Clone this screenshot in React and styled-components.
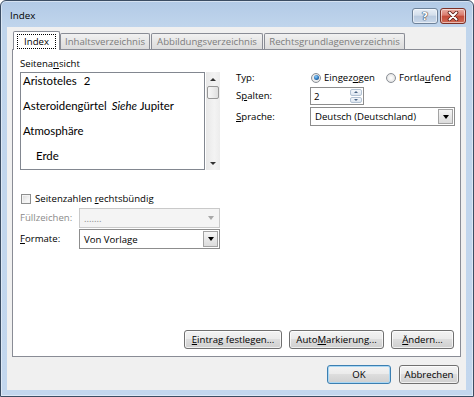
import React from 'react';
import styled, { createGlobalStyle } from 'styled-components';

const UI_FONT = `"Open Sans", "Noto Sans", "DejaVu Sans", sans-serif`;

const GlobalStyle = createGlobalStyle`
  html, body { margin: 0; padding: 0; background: #ffffff; }
  * { box-sizing: border-box; }
`;

const Window = styled.div`
  width: 474px;
  height: 397px;
  border: 1px solid #3b4d63;
  border-radius: 6px 6px 0 0;
  background: linear-gradient(180deg, #b2cae6 0px, #c0d5ec 26px, #c3d7ee 100%);
  box-shadow: inset 0 0 0 1px rgba(255, 255, 255, 0.45);
  display: flex;
  flex-direction: column;
  padding: 0 7px 6px 6px;
  font-family: ${UI_FONT};
  font-size: 9.6px;
  color: #000;
  overflow: hidden;
`;

const TitleBar = styled.div`
  height: 26px;
  flex: none;
  display: flex;
  justify-content: space-between;
  align-items: flex-start;
`;

const Title = styled.div`
  padding: 8px 0 0 3px;
  line-height: 13px;
  font-size: 9.8px;
  color: #000;
`;

const CaptionButtons = styled.div`
  margin-top: 7px;
  display: flex;
  gap: 2px;
`;

const CaptionButton = styled.div`
  width: 26px;
  height: 16px;
  border-radius: 3px;
  border: 1px solid ${p => (p.$close ? '#7d3026' : '#6e8299')};
  background: ${p =>
    p.$close
      ? 'linear-gradient(180deg, #eab0a6 0%, #d97a6c 45%, #c44a38 50%, #cf6a55 100%)'
      : 'linear-gradient(180deg, #e8eff7 0%, #d3deeb 45%, #b9cadf 50%, #c9d8ea 100%)'};
  box-shadow: inset 0 0 0 1px rgba(255, 255, 255, 0.55);
  display: flex;
  align-items: center;
  justify-content: center;
`;

const HelpGlyph = styled.span`
  font-family: "DejaVu Sans", sans-serif;
  font-weight: bold;
  font-size: 11px;
  line-height: 11px;
  color: #ffffff;
  text-shadow: 0 0 1px #2b3b4f, 0 0 1px #2b3b4f, 0 0 1px #2b3b4f;
`;

const Client = styled.div`
  flex: 1;
  background: #f0f0f0;
  display: flex;
  flex-direction: column;
  padding: 4px 5px 6px 5px;
`;

const TabStrip = styled.div`
  height: 18px;
  flex: none;
  display: flex;
  align-items: flex-end;
  padding-left: 1px;
  position: relative;
  z-index: 1;
`;

const Tab = styled.div`
  width: ${p => p.$w}px;
  margin-left: ${p => p.$ml || 0}px;
  height: ${p => (p.$active ? 19 : 16)}px;
  margin-bottom: ${p => (p.$active ? -1 : 0)}px;
  border: 1px solid #898c95;
  border-bottom: none;
  border-radius: 2px 2px 0 0;
  background: ${p =>
    p.$active ? '#ffffff' : 'linear-gradient(180deg, #f1f1f1 0%, #e6e6e6 50%, #dcdcdc 100%)'};
  color: ${p => (p.$active ? '#000' : '#7c7c7c')};
  display: flex;
  align-items: center;
  justify-content: center;
  white-space: nowrap;
`;

const FocusRing = styled.span`
  border: 1px dotted #000;
  padding: 0 6px;
  line-height: 13px;
`;

const Panel = styled.div`
  height: 308px;
  flex: none;
  border: 1px solid #898c95;
  background: #ffffff;
  display: flex;
  flex-direction: column;
  padding: 8px 6px 7px 7px;
`;

const ContentGrid = styled.div`
  display: grid;
  grid-template-columns: 200px 219px;
  column-gap: 16px;
  align-items: start;
`;

const Column = styled.div`
  display: flex;
  flex-direction: column;
  padding-top: ${p => p.$top || 0}px;
`;

const Label = styled.div`
  line-height: 12px;
  height: 12px;
  white-space: nowrap;
  color: ${p => (p.$disabled ? '#8b8b8b' : '#000')};
  width: ${p => (p.$w ? `${p.$w}px` : 'auto')};
  flex: none;
`;

const Text = styled.span`
  white-space: pre;
`;

const Key = styled.u`
  text-decoration: underline;
  text-underline-offset: 1px;
`;

const PreviewRow = styled.div`
  margin-top: 2px;
  height: 98px;
  display: flex;
`;

const PreviewList = styled.div`
  width: 185px;
  border: 1px solid #828790;
  background: #fff;
  display: flex;
  flex-direction: column;
  gap: 9px;
  padding: 0 0 0 2px;
  overflow: hidden;
  font-family: Lato, "Open Sans", sans-serif;
  font-size: 11.4px;
`;

const Entry = styled.div`
  line-height: 16px;
  height: 16px;
  padding-left: ${p => p.$indent || 0}px;
  white-space: nowrap;
`;

const Gap = styled.span`
  display: inline-block;
  width: ${p => p.$w}px;
`;

const Scrollbar = styled.div`
  width: 14px;
  margin-left: 1px;
  background: linear-gradient(90deg, #e8e8e8 0%, #f3f3f3 60%, #ececec 100%);
  display: flex;
  flex-direction: column;
  align-items: center;
`;

const ScrollArrow = styled.div`
  height: 14px;
  width: 14px;
  display: flex;
  align-items: center;
  justify-content: center;
`;

const Triangle = styled.span`
  width: 0;
  height: 0;
  border-left: ${p => p.$size || 3}px solid transparent;
  border-right: ${p => p.$size || 3}px solid transparent;
  ${p =>
    p.$up
      ? `border-bottom: ${p.$h || 3}px solid ${p.$color || '#000'};`
      : `border-top: ${p.$h || 3}px solid ${p.$color || '#000'};`}
`;

const Thumb = styled.div`
  width: 12px;
  height: 13px;
  border: 1px solid #979797;
  border-radius: 2px;
  background: linear-gradient(90deg, #f7f7f7 0%, #ececec 50%, #dedede 100%);
`;

const Spacer = styled.div`
  flex: 1;
`;

const Row = styled.div`
  display: flex;
  align-items: center;
  height: ${p => p.$h}px;
  margin-top: ${p => p.$mt || 0}px;
  white-space: nowrap;
`;

const CheckBox = styled.span`
  width: 10px;
  height: 10px;
  margin: 0 4px 0 1px;
  border: 1px solid #8e8f8f;
  background: linear-gradient(135deg, #d9d9d9 0%, #f2f2f2 60%, #ffffff 100%);
  box-shadow: inset 0 0 0 1px #f4f4f4;
  flex: none;
`;

const RadioGroup = styled.span`
  display: inline-flex;
  align-items: center;
  margin-right: ${p => p.$mr || 0}px;
`;

const Radio = styled.span`
  width: 10px;
  height: 10px;
  margin: 0 3px 0 1px;
  border-radius: 50%;
  border: 1px solid #8a8f96;
  background: radial-gradient(circle at 50% 50%, #ffffff 0%, #eeeeee 50%, #d3d3d3 100%);
  display: inline-flex;
  align-items: center;
  justify-content: center;
  flex: none;

  &::after {
    content: '';
    display: ${p => (p.$checked ? 'block' : 'none')};
    width: 5px;
    height: 5px;
    border-radius: 50%;
    background: radial-gradient(circle at 40% 35%, #8fd0ff 0%, #2a73b8 55%, #0f3f70 100%);
  }
`;

const Combo = styled.div`
  width: ${p => p.$w}px;
  height: ${p => p.$h}px;
  border: 1px solid ${p => (p.$disabled ? '#c9c9c9' : '#8d8d8d')};
  background: ${p => (p.$disabled ? '#f4f4f4' : '#ffffff')};
  display: flex;
  align-items: stretch;
  padding: 1px;
  flex: none;
`;

const ComboText = styled.span`
  flex: 1;
  display: flex;
  align-items: center;
  padding-left: 3px;
  color: ${p => (p.$disabled ? '#8b8b8b' : '#000')};
`;

const ComboButton = styled.span`
  width: 15px;
  border: 1px solid ${p => (p.$disabled ? 'transparent' : '#a3a3a3')};
  background: ${p =>
    p.$disabled ? 'transparent' : 'linear-gradient(180deg, #f6f6f6 0%, #e8e8e8 50%, #dcdcdc 100%)'};
  display: flex;
  align-items: center;
  justify-content: center;
`;

const Spin = styled.div`
  width: 54px;
  height: 18px;
  border: 1px solid #8d8d8d;
  background: #fff;
  display: flex;
  padding: 1px;
`;

const SpinValue = styled.span`
  flex: 1;
  display: flex;
  align-items: center;
  padding-left: 2px;
`;

const SpinButtons = styled.span`
  width: 12px;
  display: flex;
  flex-direction: column;
  gap: 1px;
`;

const SpinButton = styled.span`
  flex: 1;
  border: 1px solid #b3c2d3;
  border-radius: 2px;
  background: linear-gradient(180deg, #f4f7fb 0%, #dde6f0 100%);
  display: flex;
  align-items: center;
  justify-content: center;
`;

const ButtonRow = styled.div`
  margin-top: auto;
  display: flex;
  justify-content: flex-end;
  gap: 7px;
`;

const Footer = styled.div`
  margin-top: 8px;
  margin-right: 2px;
  display: flex;
  justify-content: flex-end;
  gap: 8px;
`;

const Button = styled.div`
  width: ${p => p.$w}px;
  height: 19px;
  border: 1px solid ${p => (p.$default ? '#3c7fb1' : '#707070')};
  border-radius: 3px;
  background: linear-gradient(180deg, #f3f3f3 0%, #ebebeb 45%, #dddddd 50%, #cfcfcf 100%);
  box-shadow: inset 0 0 0 1px ${p => (p.$default ? '#a9d7f4' : 'rgba(255,255,255,0.7)')};
  display: flex;
  align-items: center;
  justify-content: center;
  white-space: nowrap;
  color: #000;
`;

function CloseGlyph() {
  return (
    <svg width="12" height="10" viewBox="0 0 12 10">
      <path d="M2.5 1.5 L9.5 8.5 M9.5 1.5 L2.5 8.5" stroke="#5a1a12" strokeWidth="3.6" strokeLinecap="round" />
      <path d="M2.5 1.5 L9.5 8.5 M9.5 1.5 L2.5 8.5" stroke="#ffffff" strokeWidth="2" strokeLinecap="round" />
    </svg>
  );
}

export default function App() {
  return (
    <>
      <GlobalStyle />
      <Window>
        <TitleBar>
          <Title>Index</Title>
          <CaptionButtons>
            <CaptionButton>
              <HelpGlyph>?</HelpGlyph>
            </CaptionButton>
            <CaptionButton $close>
              <CloseGlyph />
            </CaptionButton>
          </CaptionButtons>
        </TitleBar>
        <Client>
          <TabStrip>
            <Tab $active $w={47}>
              <FocusRing>Index</FocusRing>
            </Tab>
            <Tab $w={90}>Inhaltsverzeichnis</Tab>
            <Tab $w={112} $ml={1}>Abbildungsverzeichnis</Tab>
            <Tab $w={141} $ml={1}>Rechtsgrundlagenverzeichnis</Tab>
          </TabStrip>
          <Panel>
            <ContentGrid>
              <Column>
                <Label>
                  Seitena<Key>n</Key>sicht
                </Label>
                <PreviewRow>
                  <PreviewList>
                    <Entry>
                      Aristoteles<Gap $w={7} />2
                    </Entry>
                    <Entry>
                      Asteroidengürtel<Gap $w={5} />
                      <i>Siehe</i> Jupiter
                    </Entry>
                    <Entry>Atmosphäre</Entry>
                    <Entry $indent={13}>Erde</Entry>
                  </PreviewList>
                  <Scrollbar>
                    <ScrollArrow>
                      <Triangle $up $size={3} $h={3} $color="#333" />
                    </ScrollArrow>
                    <Thumb />
                    <Spacer />
                    <ScrollArrow>
                      <Triangle $size={3} $h={3} $color="#333" />
                    </ScrollArrow>
                  </Scrollbar>
                </PreviewRow>
                <Row $h={13} $mt={22}>
                  <CheckBox />
                  <Text>
                    Seitenzahlen <Key>r</Key>echtsbündig
                  </Text>
                </Row>
                <Row $h={20} $mt={3}>
                  <Label $w={59} $disabled>
                    Füllzeichen:
                  </Label>
                  <Combo $w={141} $h={20} $disabled>
                    <ComboText $disabled>.......</ComboText>
                    <ComboButton $disabled>
                      <Triangle $size={3.5} $h={4} $color="#a8a8a8" />
                    </ComboButton>
                  </Combo>
                </Row>
                <Row $h={20} $mt={1}>
                  <Label $w={59}>
                    <Key>F</Key>ormate:
                  </Label>
                  <Combo $w={141} $h={20}>
                    <ComboText>Von Vorlage</ComboText>
                    <ComboButton>
                      <Triangle $size={3.5} $h={4} />
                    </ComboButton>
                  </Combo>
                </Row>
              </Column>
              <Column $top={13}>
                <Row $h={13}>
                  <Label $w={74}>Typ:</Label>
                  <RadioGroup $mr={10}>
                    <Radio $checked />
                    <Text>
                      Eingez<Key>o</Key>gen
                    </Text>
                  </RadioGroup>
                  <RadioGroup>
                    <Radio />
                    <Text>
                      Fortla<Key>u</Key>fend
                    </Text>
                  </RadioGroup>
                </Row>
                <Row $h={18} $mt={3}>
                  <Label $w={74}>
                    S<Key>p</Key>alten:
                  </Label>
                  <Spin>
                    <SpinValue>2</SpinValue>
                    <SpinButtons>
                      <SpinButton>
                        <Triangle $up $size={2.5} $h={2.5} $color="#4b6584" />
                      </SpinButton>
                      <SpinButton>
                        <Triangle $size={2.5} $h={2.5} $color="#4b6584" />
                      </SpinButton>
                    </SpinButtons>
                  </Spin>
                </Row>
                <Row $h={19} $mt={2}>
                  <Label $w={74}>
                    <Key>S</Key>prache:
                  </Label>
                  <Combo $w={145} $h={19}>
                    <ComboText>Deutsch (Deutschland)</ComboText>
                    <ComboButton>
                      <Triangle $size={3.5} $h={4} />
                    </ComboButton>
                  </Combo>
                </Row>
              </Column>
            </ContentGrid>
            <ButtonRow>
              <Button $w={98}>
                <Text>
                  <Key>E</Key>intrag festlegen...
                </Text>
              </Button>
              <Button $w={95}>
                <Text>
                  Auto<Key>M</Key>arkierung...
                </Text>
              </Button>
              <Button $w={63}>
                <Text>
                  <Key>Ä</Key>ndern...
                </Text>
              </Button>
            </ButtonRow>
          </Panel>
          <Footer>
            <Button $w={64} $default>
              OK
            </Button>
            <Button $w={60}>Abbrechen</Button>
          </Footer>
        </Client>
      </Window>
    </>
  );
}
